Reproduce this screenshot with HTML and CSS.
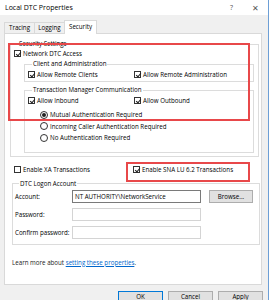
FILE: index.html
```html
<!DOCTYPE html>
<html lang="en">
<head>
    <meta charset="UTF-8">
    <title>Local DTC Properties</title>
    <link rel="stylesheet" href="styles.css">
</head>
<body>

<div class="window">
    <div class="titlebar">
        <span class="title">Local DTC Properties</span>
        <span class="help">?</span>
        <span class="close">&#x2715;</span>
    </div>

    <div class="tabs">
        <div class="tab">Tracing</div>
        <div class="tab">Logging</div>
        <div class="tab active">Security</div>
    </div>

    <div class="panel">
        <fieldset class="group security">
            <legend>Security Settings</legend>
            <div class="row">
                <span class="check on"></span> Network DTC Access
            </div>

            <fieldset class="group sub client">
                <legend>Client and Administration</legend>
                <div class="cols">
                    <div class="row"><span class="check on"></span> Allow Remote Clients</div>
                    <div class="row"><span class="check on"></span> Allow Remote Administration</div>
                </div>
            </fieldset>

            <fieldset class="group sub tmc">
                <legend>Transaction Manager Communication</legend>
                <div class="cols">
                    <div class="row"><span class="check on"></span> Allow Inbound</div>
                    <div class="row"><span class="check on"></span> Allow Outbound</div>
                </div>
                <div class="radios">
                    <div class="row"><span class="radio on"></span> Mutual Authentication Required</div>
                    <div class="row"><span class="radio"></span> Incoming Caller Authentication Required</div>
                    <div class="row"><span class="radio"></span> No Authentication Required</div>
                </div>
            </fieldset>
        </fieldset>

        <div class="cols transactions">
            <div class="row"><span class="check"></span> Enable XA Transactions</div>
            <div class="row"><span class="check on"></span> Enable SNA LU 6.2 Transactions</div>
        </div>

        <fieldset class="group logon">
            <legend>DTC Logon Account</legend>
            <div class="field">
                <label>Account:</label>
                <div class="input focus">NT AUTHORITY\NetworkService</div>
                <div class="btn browse">Browse...</div>
            </div>
            <div class="field">
                <label>Password:</label>
                <div class="input"></div>
            </div>
            <div class="field">
                <label>Confirm password:</label>
                <div class="input"></div>
            </div>
        </fieldset>

        <p class="learn">Learn more about <a href="#">setting these properties</a>.</p>

        <!-- annotation boxes -->
        <div class="mark mark-security"></div>
        <div class="mark mark-sna"></div>
    </div>

    <div class="buttons">
        <div class="btn default">OK</div>
        <div class="btn">Cancel</div>
        <div class="btn">Apply</div>
    </div>
</div>

</body>
</html>
```

FILE: styles.css
```css
body {
    margin: 0;
    background: #fff;
    font-family: 'Open Sans', 'Noto Sans', sans-serif;
    font-size: 6.2px;
    color: #000;
}

.window {
    width: 268px;
    height: 300px;
    background: #f0f0f0;
    border-right: 1px solid #6d9fd6;
    overflow: hidden;
}

.titlebar {
    height: 15px;
    background: #fff;
    display: flex;
    align-items: center;
    padding-left: 5px;
    font-size: 7px;
}

.title {
    flex: 1;
}

.help {
    color: #555;
    font-size: 7px;
    margin-right: 19px;
}

.close {
    color: #555;
    font-size: 8px;
    margin-right: 9px;
}

.tabs {
    display: flex;
    align-items: flex-end;
    height: 18px;
    padding-left: 4px;
}

.tab {
    height: 10px;
    line-height: 10px;
    width: 29px;
    text-align: center;
    border: 1px solid #d9d9d9;
    border-bottom: none;
    margin-right: -1px;
    white-space: nowrap;
}

.tab.active {
    height: 13px;
    line-height: 12px;
    width: 31px;
    background: #fff;
    position: relative;
    top: 1px;
    z-index: 1;
}

.panel {
    position: relative;
    margin-left: 4px;
    width: 256px;
    height: 250px;
    background: #fff;
    border: 1px solid #d9d9d9;
}

.group {
    margin: 0;
    padding: 0;
    border: 1px solid #dcdcdc;
    min-width: 0;
}

.group legend {
    padding: 0 1px;
    margin-left: 4px;
    line-height: 8px;
    color: #000;
}

.security {
    margin: 6px 2px 0 5px;
    padding: 0 4px 3px 3px;
}

.sub {
    margin: 2px 0 0 10px;
    padding: 1px 3px 2px 3px;
}

.tmc {
    margin-top: 4px;
    padding-bottom: 8px;
}

.row {
    display: flex;
    align-items: center;
    height: 10px;
    white-space: nowrap;
}

.cols {
    display: grid;
    grid-template-columns: 106px 1fr;
}

.radios {
    padding-left: 12px;
    margin-top: 4px;
}

.radios .row {
    height: 11.5px;
}

.check {
    width: 7px;
    height: 7px;
    border: 1px solid #333;
    background: #fff;
    box-sizing: border-box;
    margin-right: 2px;
    position: relative;
    flex: none;
}

.check.on::after {
    content: '';
    position: absolute;
    left: 1.5px;
    top: 0;
    width: 2px;
    height: 4px;
    border: solid #222;
    border-width: 0 1px 1px 0;
    transform: rotate(40deg);
}

.radio {
    width: 8px;
    height: 8px;
    border: 1px solid #333;
    border-radius: 50%;
    box-sizing: border-box;
    margin-right: 2px;
    position: relative;
    flex: none;
}

.radio.on::after {
    content: '';
    position: absolute;
    left: 1px;
    top: 1px;
    width: 4px;
    height: 4px;
    border-radius: 50%;
    background: #222;
}

.transactions {
    margin: 8px 0 0 9px;
    grid-template-columns: 119px 1fr;
}

.logon {
    margin: 5px 1px 0 7px;
    padding: 0 2px 5px 2px;
}

.field {
    display: flex;
    align-items: center;
    height: 13px;
    margin-top: 5px;
}

.field:first-of-type {
    margin-top: 2px;
}

.field label {
    width: 57px;
    flex: none;
    white-space: nowrap;
}

.input {
    width: 125px;
    height: 11px;
    line-height: 11px;
    border: 1px solid #d4d4d4;
    padding-left: 2px;
    white-space: nowrap;
    overflow: hidden;
}

.input.focus {
    border-color: #7a7a7a;
}

.btn {
    height: 11px;
    line-height: 11px;
    border: 1px solid #adadad;
    background: #e1e1e1;
    text-align: center;
}

.browse {
    width: 42px;
    margin-left: 8px;
}

.learn {
    margin: 13px 0 0 7px;
    color: #222;
}

.learn a {
    color: #0066cc;
}

.mark {
    position: absolute;
    border: 2px solid #e8484a;
    box-sizing: border-box;
}

.mark-security {
    left: 3px;
    top: 9px;
    width: 242px;
    height: 78px;
}

.mark-sna {
    left: 121px;
    top: 128px;
    width: 124px;
    height: 20px;
}

.buttons {
    display: flex;
    gap: 5px;
    padding: 6px 0 0 118px;
}

.buttons .btn {
    width: 43px;
    height: 13px;
    line-height: 9px;
}

.buttons .default {
    border-color: #0078d7;
}
```
